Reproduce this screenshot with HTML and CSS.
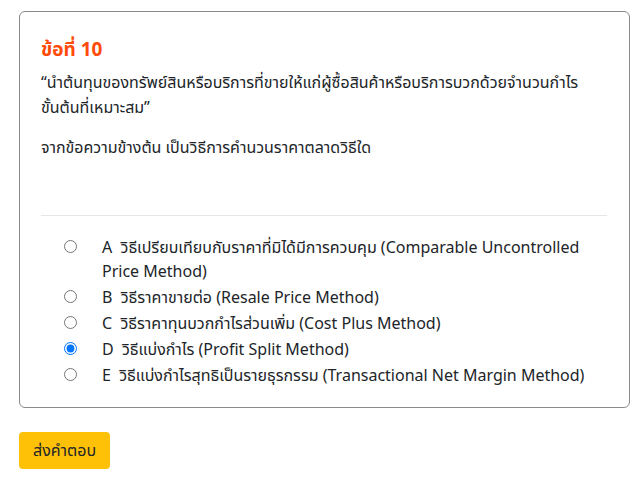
FILE: index.html
```html
<!DOCTYPE html>
<html lang="th">
<head>
<meta charset="utf-8">
<link rel="stylesheet" href="styles.css">
</head>
<body>
<div class="page">
  <div class="card">
    <h2 class="title">ข้อที่ 10</h2>
    <p class="question">“นำต้นทุนของทรัพย์สินหรือบริการที่ขายให้แก่ผู้ซื้อสินค้าหรือบริการบวกด้วยจำนวนกำไร <span class="keep">ขั้นต้นที่เหมาะสม”</span></p>
    <p class="question ask">จากข้อความข้างต้น เป็นวิธีการคำนวนราคาตลาดวิธีใด</p>
    <hr class="divider">
    <div class="options">
      <label class="option"><input type="radio" name="q"><span class="text">A&nbsp; วิธีเปรียบเทียบกับราคาที่มิได้มีการควบคุม (Comparable Uncontrolled Price Method)</span></label>
      <label class="option"><input type="radio" name="q"><span class="text">B&nbsp; วิธีราคาขายต่อ (Resale Price Method)</span></label>
      <label class="option"><input type="radio" name="q"><span class="text">C&nbsp; วิธีราคาทุนบวกกำไรส่วนเพิ่ม (Cost Plus Method)</span></label>
      <label class="option"><input type="radio" name="q" checked><span class="text">D&nbsp; วิธีแบ่งกำไร (Profit Split Method)</span></label>
      <label class="option"><input type="radio" name="q"><span class="text">E&nbsp; วิธีแบ่งกำไรสุทธิเป็นรายธุรกรรม (Transactional Net Margin Method)</span></label>
    </div>
  </div>
  <button class="submit" type="button">ส่งคำตอบ</button>
</div>
</body>
</html>
```
FILE: styles.css
```css
html, body {
  margin: 0;
  padding: 0;
  background: #fff;
}
body {
  font-family: "Noto Sans", "Noto Sans Thai", sans-serif;
  color: #212529;
  font-size: 16px;
}
.page {
  padding: 11px 12px 0 19px;
}
.card {
  border: 1px solid #8a8a8a;
  border-radius: 6px;
  padding: 24px 22px 20px 21px;
  width: 566px;
}
.title {
  margin: 0 0 8px;
  font-size: 19px;
  font-weight: 700;
  color: #ff4a0a;
  line-height: 26px;
}
.question {
  margin: 0;
  line-height: 25px;
}
.keep {
  white-space: nowrap;
}
.ask {
  margin-top: 15px;
}
.divider {
  border: 0;
  border-top: 1px solid #e6e6e6;
  margin: 55px 0 19px;
}
.options {
  display: flex;
  flex-direction: column;
  gap: 2px;
  padding-left: 23px;
}
.option {
  display: flex;
  align-items: flex-start;
  line-height: 24px;
}
.option input {
  margin: 5px 0 0 0;
  width: 13px;
  height: 13px;
  flex: none;
}
.text {
  flex: 1;
  margin-left: 25px;
}
.submit {
  margin-top: 24px;
  background: #ffc107;
  border: 0;
  border-radius: 4px;
  padding: 0 14px;
  height: 37px;
  font-family: inherit;
  font-size: 16px;
  color: #212529;
}
```
